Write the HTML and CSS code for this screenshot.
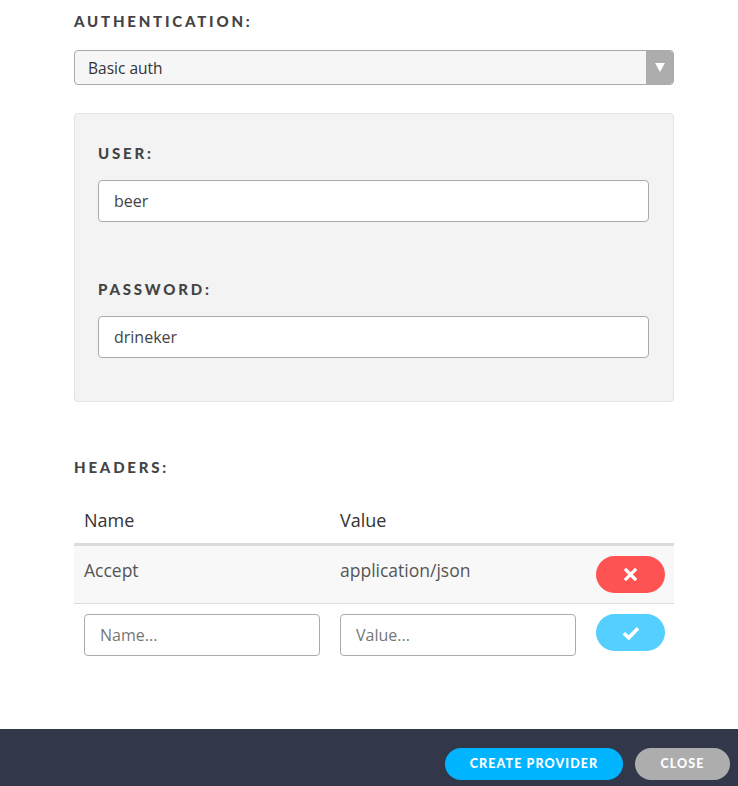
FILE: index.html
```html
<!DOCTYPE html>
<html>
<head>
<meta charset="utf-8">
<link rel="stylesheet" href="styles.css">
</head>
<body>
<main class="content">
  <div class="label label-auth">AUTHENTICATION:</div>
  <div class="select">
    <span class="select-text">Basic auth</span>
    <span class="select-arrow"><svg width="10" height="9" viewBox="0 0 10 9"><path d="M0 0H10L5 9Z" fill="#fff"/></svg></span>
  </div>
  <section class="panel">
    <div class="label">USER:</div>
    <div class="input">beer</div>
    <div class="label label-pass">PASSWORD:</div>
    <div class="input">drineker</div>
  </section>
  <div class="label label-headers">HEADERS:</div>
  <div class="table">
    <div class="row head">
      <div class="cell name">Name</div>
      <div class="cell value">Value</div>
      <div class="cell act"></div>
    </div>
    <div class="row data">
      <div class="cell name">Accept</div>
      <div class="cell value">application/json</div>
      <div class="cell act"><span class="pill red"><svg width="13" height="13" viewBox="0 0 13 13"><path d="M2 2L11 11M11 2L2 11" stroke="#fff" stroke-width="3.2" stroke-linecap="square"/></svg></span></div>
    </div>
    <div class="row new">
      <div class="cell name"><div class="input small ph">Name...</div></div>
      <div class="cell value"><div class="input small ph">Value...</div></div>
      <div class="cell act"><span class="pill blue"><svg width="18" height="14" viewBox="0 0 18 14"><path d="M1.8 7.2L6.8 11.8L16 2.2" stroke="#fff" stroke-width="3.6" fill="none"/></svg></span></div>
    </div>
  </div>
</main>
<footer class="footer">
  <span class="btn btn-create">CREATE PROVIDER</span>
  <span class="btn btn-close">CLOSE</span>
</footer>
</body>
</html>
```
FILE: styles.css
```css
* { box-sizing: border-box; }
html, body { margin: 0; padding: 0; background: #fff; }
body {
  font-family: "Open Sans", "Lato", sans-serif;
  color: #444;
  width: 738px;
  height: 786px;
  display: flex;
  flex-direction: column;
}
.content {
  padding: 12px 64px 0 74px;
  flex: 1;
}
.label {
  font-family: "Lato", "Open Sans", sans-serif;
  font-weight: 900;
  font-size: 15px;
  letter-spacing: 2.8px;
  color: #444;
  line-height: 18px;
}
.select {
  margin-top: 20px;
  height: 35px;
  border: 1px solid #aaa;
  border-radius: 4px;
  background: #f6f6f6;
  display: flex;
  align-items: center;
  overflow: hidden;
}
.select-text {
  flex: 1;
  padding-left: 13px;
  font-size: 15.5px;
  color: #333;
}
.select-arrow {
  width: 28px;
  height: 35px;
  margin-right: -1px;
  background: #adadad;
  display: flex;
  align-items: center;
  justify-content: center;
}
.panel {
  margin-top: 28px;
  height: 289px;
  background: #f3f3f3;
  border: 1px solid #e2e2e2;
  border-radius: 4px;
  padding: 30px 24px 0 23px;
}
.input {
  margin-top: 18px;
  height: 42px;
  border: 1px solid #aaa;
  border-radius: 4px;
  background: #fff;
  padding-left: 15px;
  display: flex;
  align-items: center;
  font-size: 16px;
  color: #444;
}
.label-pass { margin-top: 58px; }
.label-headers { margin-top: 56px; }
.table { margin-top: 28px; }
.row { display: flex; align-items: center; }
.cell.name { width: 266px; padding-left: 10px; }
.cell.value { width: 256px; }
.cell.act { flex: 1; display: flex; justify-content: flex-end; padding-right: 9px; }
.head {
  height: 42px;
  border-bottom: 3px solid #dcdcdc;
  font-size: 18px;
  font-weight: 500;
  color: #333;
  padding-bottom: 7px;
}
.data {
  height: 58px;
  background: #f8f8f8;
  border-bottom: 1px solid #dcdcdc;
  font-size: 17.5px;
  color: #555;
  padding-bottom: 9px;
}
.data .pill { margin-top: 9px; }
.new { align-items: flex-start; padding-top: 10px; }
.new .input.small { margin-top: 0; width: 236px; font-size: 16px; color: #777; }
.pill {
  width: 69px;
  height: 37px;
  border-radius: 19px;
  display: flex;
  align-items: center;
  justify-content: center;
}
.pill.red { background: #ff5252; }
.pill.blue { background: #55cfff; }
.footer {
  height: 57px;
  background: #323749;
  display: flex;
  align-items: center;
  justify-content: flex-end;
  gap: 12px;
  padding-right: 8px;
  padding-top: 12px;
}
.btn {
  height: 32px;
  border-radius: 16px;
  display: flex;
  align-items: center;
  justify-content: center;
  color: #fff;
  font-family: "Lato", sans-serif;
  font-weight: 900;
  font-size: 12.5px;
  letter-spacing: 1.1px;
}
.btn-create { width: 178px; background: #00b4ff; }
.btn-close { width: 95px; background: #adadad; }
```
